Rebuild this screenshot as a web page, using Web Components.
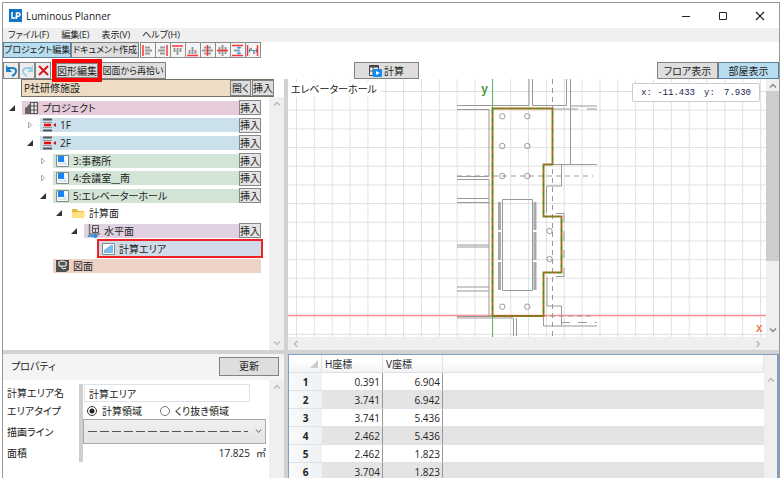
<!DOCTYPE html>
<html lang="ja">
<head>
<meta charset="utf-8">
<title>Luminous Planner</title>
<style>
html, body { margin: 0; height: 100%; background: #fff; }
body { font: 11px/14px "Open Sans", "Noto Sans CJK JP", sans-serif; color: #222; font-feature-settings: "palt"; }
</style>
</head>
<body>
<lp-app></lp-app>
<script>
const base = `<style>
:host, *, *::before { box-sizing: border-box; }
button, input, select { font: inherit; color: inherit; font-feature-settings: inherit; margin: 0; }
svg { display: block; }
</style>`;

function define(name, html, setup) {
  const template = document.createElement('template');
  template.innerHTML = base + html;
  customElements.define(name, class extends HTMLElement {
    constructor() {
      super();
      this.attachShadow({ mode: 'open' }).append(template.content.cloneNode(true));
    }
    connectedCallback() { if (setup) setup(this, this.shadowRoot); }
  });
}

define('lp-button', `<style>
:host { display: inline-flex; height: 17px; font-size: 10px; }
button { flex: 1; display: flex; align-items: center; justify-content: center; gap: 2px; padding: 0; border: 1px solid #828282; background: #dedede; line-height: 12px; white-space: nowrap; }
:host([active]) button { background: #b9ddf0; border-color: #5b8299; }
:host([icon]) button { background: #eee; }
</style><button type="button"><slot></slot></button>`, (host, root) => {
  if (host.title) root.querySelector('button').setAttribute('aria-label', host.title);
});

define('lp-titlebar', `<style>
:host { display: flex; align-items: center; height: 25px; padding: 0 12px 0 6px; gap: 4px; background: #fff; }
h1 { flex: 1; margin: 0; font-size: 10px; line-height: 16px; font-weight: 400; }
.win { display: flex; gap: 24px; }
.win button { width: 13px; height: 14px; padding: 0; border: 0; background: none; }
</style>
<svg width="13" height="13" viewBox="0 0 13 13"><rect width="13" height="13" fill="#1274c5"/><path d="M3 3v6h3.500M7.500 10V4h2q1.500 0 1.500 1.500T9.500 7.200H6.500" fill="none" stroke="#fff" stroke-width="1.500"/></svg>
<h1>Luminous Planner</h1>
<div class="win">
<button aria-label="最小化"><svg width="12" height="12"><path d="M2 6.500h8" stroke="#222"/></svg></button>
<button aria-label="最大化"><svg width="12" height="12"><path d="M2.500 2.500h7v7h-7z" fill="none" stroke="#222"/></svg></button>
<button aria-label="閉じる"><svg width="12" height="12"><path d="M2 2l8 8M10 2l-8 8" stroke="#222" stroke-width="1.200"/></svg></button>
</div>`);

define('lp-menubar', `<style>
:host { display: flex; height: 14px; padding: 0 5px; gap: 12px; background: #efefef; font-size: 9px; line-height: 14px; }
button { padding: 0; border: 0; background: none; line-height: 14px; }
</style><button>ファイル(F)</button><button>編集(E)</button><button>表示(V)</button><button>ヘルプ(H)</button>`);

const bars = {
  left: '<path d="M4 3.500h5M4 6.500h7M4 9.500h5"/><path class="r" d="M2 1v11"/>',
  right: '<path d="M4 3.500h5M2 6.500h7M4 9.500h5"/><path class="r" d="M11 1v11"/>',
  top: '<path d="M3.500 4v4M6.500 4v7M9.500 4v4"/><path class="r" d="M1 2h11"/>',
  bottom: '<path d="M3.500 6v4M6.500 3v7M9.500 6v4"/><path class="r" d="M1 11.500h11"/>',
  middle: '<path d="M3 3.500h7M1 6.500h11M3 9.500h7"/><path class="r" d="M6.500 1v11"/>',
  center: '<path d="M3.500 3v7M6.500 1v11M9.500 3v7"/><path class="r" d="M1 6.500h11"/>',
  vspace: '<path class="b" d="M8 3v7M6 4l2-1 2 1M6 9l2 1 2-1"/><path d="M3 6.500h4"/><path class="r" d="M1 1.500h11M1 11.500h11"/>',
  hspace: '<path class="b" d="M3 6.500h8M4 4.500l-1 2 1 2M10 4.500l1 2-1 2"/><path d="M5 4v3M8 6v4"/><path class="r" d="M1.500 1v11M11.500 1v11"/>'
};
const labels = { left: '左揃え', right: '右揃え', top: '上揃え', bottom: '下揃え', middle: '左右中央', center: '上下中央', vspace: '上下等間隔', hspace: '左右等間隔' };
define('lp-align-tools', `<style>
:host { display: flex; }
button { width: 16px; height: 16px; padding: 0; margin-right: -1px; border: 1px solid #8c8c8c; background: #f5f5f5; }
path { stroke: #999; stroke-width: 2; fill: none; } .r { stroke: #f33; stroke-width: 1.500; } .b { stroke: #2589e0; stroke-width: 1; }
</style>` + Object.keys(bars).map(k => `<button aria-label="${labels[k]}"><svg width="13" height="13">${bars[k]}</svg></button>`).join(''));

define('lp-scrollbar', `<style>
:host { display: flex; flex-direction: column; justify-content: space-between; background: #efefef; color: #bbb; padding: 2px 0; }
:host([horizontal]) { flex-direction: row; align-items: center; padding: 0 3px; }
svg { flex: none; align-self: center; fill: none; stroke: currentColor; stroke-width: 1.500; }
.thumb { display: none; background: #cdcdcd; }
:host([thumb]) .thumb { display: block; flex: 0 0 67%; margin-bottom: auto; }
:host([thumb]) { color: #888; }
:host([table]) { padding-top: 20px; }
:host([table]) svg:last-child, :host([open-end]) svg:last-child { display: none; }
</style>
<svg width="10" height="10" id="a"><path d="M2 6.500l3-3 3 3"/></svg><div class="thumb"></div><svg width="10" height="10" id="z"><path d="M2 3.500l3 3 3-3"/></svg>`, (host, root) => {
  if (host.hasAttribute('horizontal')) {
    root.querySelector('#a path').setAttribute('d', 'M6.500 2l-3 3 3 3');
    root.querySelector('#z path').setAttribute('d', 'M3.500 2l3 3-3 3');
  }
});

const icons = {
  building: '<path d="M1 13V7l3-2v8M4 13V4l2-1v10" fill="#666"/><path d="M6.500 1.500h7v11h-7zM10 1v12M6 5h8M6 9h8" fill="#eee" stroke="#555" stroke-width="1.200"/>',
  floor: '<path d="M1 1.500h9M1 12.500h9" stroke="#555" stroke-width="2"/><path d="M1 4.500h9M1 9.500h9" stroke="#999"/><path d="M2 7h7" stroke="#f00" stroke-width="2.500"/><path d="M11 7l3-2v4z" fill="#b22"/>',
  room: '<path d="M1.500 1.500h12v11h-12z" fill="#f7fbfd" stroke="#888"/><path d="M3 2h6v6H3z" fill="#1687f5"/><path d="M3 10h9M10 6v5" stroke="#c8d5dd"/>',
  folder: '<path d="M1 3h5l1 2h6v7H1z" fill="#e9b93b"/><path d="M1 6h13l-1 6H1z" fill="#ffe084"/>',
  plane: '<path d="M3.500 0v10H14" fill="none" stroke="#777" stroke-width="1.500"/><path d="M6.500 1.500h6v7h-6zM7 4.500h5M9.500 5v3" fill="none" stroke="#555"/><path d="M2 12h9M8 10l3 2-3 2" stroke="#2589df" fill="none" stroke-width="1.500"/>',
  area: '<path d="M1.500 1.500h12v11h-12z" fill="#fff" stroke="#888"/><path d="M3 11V8l7-5h2v8z" fill="#77bdf0"/>',
  drawing: '<path d="M1 1h13v10l-3 2H1z" fill="#505050"/><path d="M3 4q4-4 9 0M4 4v3h7V4M6 7l2 3 3-1" stroke="#fff" fill="none"/>'
};
define('lp-tree-row', `<style>
:host { display: flex; align-items: center; flex: 1; padding-left: var(--indent, 0); }
.toggle { flex: none; width: 17px; height: 12px; padding: 0 0 0 3px; border: 0; background: none; }
.bar { flex: 1; display: flex; align-items: center; height: 14px; gap: 3px; padding-left: 2px; background: var(--bar, transparent); font-size: 10px; line-height: 14px; white-space: nowrap; }
.text { flex: 1; }
.insert { align-self: center; height: 15px; width: 22px; padding: 0; border: 1px solid #888; background: #e4e4e4; line-height: 12px; }
:host([selected]) .bar { outline: 2px solid #e22; height: 15px; }
</style>
<button class="toggle"></button><div class="bar"><svg width="15" height="14"></svg><span class="text"><slot></slot></span><button class="insert">挿入</button></div>`, (host, root) => {
  const state = host.getAttribute('state');
  const toggle = root.querySelector('.toggle');
  toggle.setAttribute('aria-label', '展開');
  if (state === 'open') toggle.innerHTML = '<svg width="8" height="8"><path d="M7 1v6H1z" fill="#333"/></svg>';
  else if (state === 'closed') toggle.innerHTML = '<svg width="8" height="8"><path d="M2.500 1l3 3-3 3z" fill="#fff" stroke="#aaa"/></svg>';
  else toggle.style.visibility = 'hidden';
  root.querySelector('.bar svg').innerHTML = icons[host.getAttribute('icon')];
  if (host.hasAttribute('plain')) root.querySelector('.insert').remove();
});

define('lp-tree', `<style>
:host { display: grid; grid-template: 18px 1fr / 1fr 15px; background: #fff; min-height: 0; }
header { grid-column: 1 / 3; margin: 0 10px 0 18px; display: flex; align-items: center; gap: 1px; padding-left: 2px; border: 1px solid #776f64; background: #eedcc5; font-size: 10px; line-height: 14px; }
header span { flex: 1; } header lp-button { width: 21px; height: 16px; }
.rows { display: flex; flex-direction: column; height: 176px; margin: 2px 8px 0 0; }
</style>
<header><span>P社研修施設</span><lp-button>開く</lp-button><lp-button>挿入</lp-button></header>
<div class="rows">
<lp-tree-row icon="building" state="open" style="--indent:2px;--bar:#e6cbdb">プロジェクト</lp-tree-row>
<lp-tree-row icon="floor" state="closed" style="--indent:20px;--bar:#cae0eb">1F</lp-tree-row>
<lp-tree-row icon="floor" state="open" style="--indent:20px;--bar:#cae0eb">2F</lp-tree-row>
<lp-tree-row icon="room" state="closed" style="--indent:33px;--bar:#d2e4d5">3:事務所</lp-tree-row>
<lp-tree-row icon="room" state="closed" style="--indent:33px;--bar:#d2e4d5">4:会議室__南</lp-tree-row>
<lp-tree-row icon="room" state="open" style="--indent:33px;--bar:#d2e4d5">5:エレベーターホール</lp-tree-row>
<lp-tree-row icon="folder" state="open" plain style="--indent:49px">計算面</lp-tree-row>
<lp-tree-row icon="plane" state="open" style="--indent:64px;--bar:#e0d2e2">水平面</lp-tree-row>
<lp-tree-row icon="area" plain selected style="--indent:79px;--bar:#cfdbe8">計算エリア</lp-tree-row>
<lp-tree-row icon="drawing" plain style="--indent:33px;--bar:#edd2c8">図面</lp-tree-row>
</div>
<lp-scrollbar></lp-scrollbar>`);

define('lp-plan-view', `<style>
:host { display: grid; grid-template: 1fr 13px / 1fr 13px; position: relative; background: #efefef; min-height: 0; overflow: hidden; }
.canvas { width: 100%; height: 100%; min-height: 0; background: #fff; }
.name { position: absolute; left: 0; top: 3px; padding: 0 3px; background: #fff; font-size: 10px; line-height: 15px; }
.coords { position: absolute; right: 19px; top: 4px; display: flex; width: 128px; height: 19px; align-items: center; justify-content: space-between; padding: 0 8px; border: 1px solid #ccc; border-radius: 2px; background: #fff; color: #1c1c50; font: 9px/12px "Liberation Mono", monospace; }
.w { fill: none; stroke: #999; } .d { stroke-dasharray: 5 4; }
</style>
<svg class="canvas" viewBox="288 79 478 258" preserveAspectRatio="xMidYMid slice">
<defs><pattern id="g" x="296" y="91" width="17.850" height="18.680" patternUnits="userSpaceOnUse"><path d="M.500 0v19M0 .500h18" stroke="#e0e0e0" fill="none"/></pattern></defs>
<rect x="288" y="79" width="478" height="258" fill="url(#g)"/>
<path d="M288 315.500h478" stroke="#ff9090" stroke-width="1.500"/>
<path d="M492.500 79v258" stroke="#5cb868"/>
<path class="w" d="M457 105.500h72V79M457 109.500h32v66.500M457 179.500h32V316M457 176.500h32M457 198.500h32M457 202.500h32M457 245h32M457 247h32M457 287h32M457 291h32M457 316.500h56M457 318h56M532.500 79v26.500h34V79M570.500 79v86M570 106h27M552 109h26M587 109h10M543 164.500h54M561.500 165v21h-15v27M556 213.500h8v9M564 231v10M564 250v8M564 268v8.500h-8M547 277v29h14.500v20M543.500 316v10H597M513.500 318v18M516.500 318v18M502.500 199.500h30v91h-30z"/>
<path class="w d" d="M457 176h136M552.500 79v258M505 316h88"/>
<path class="w" stroke-dasharray="9 8" d="M561 322.500h36"/>
<path d="M499.500 202v28M499.500 232v28M499.500 262v28M535 202v28M535 232v28M535 262v28" stroke="#aaa" stroke-width="3"/>
<g class="w"><circle cx="502.300" cy="116.300" r="2.700"/><circle cx="527.300" cy="116.300" r="2.700"/><circle cx="502.300" cy="146" r="2.700"/><circle cx="527.300" cy="146" r="2.700"/><circle cx="502.300" cy="176" r="2.700"/><circle cx="527.300" cy="176" r="2.700"/><circle cx="502.300" cy="306.700" r="2.700"/><circle cx="527.300" cy="306.700" r="2.700"/><circle cx="549.500" cy="231" r="2.700"/><circle cx="549.500" cy="259" r="2.700"/></g>
<g fill="none"><path d="M492.500 108.500h60v56h-9v52h18v56h-18v43.500h-51z" stroke="#a5701c" stroke-width="1.900"/><path d="M492.500 108.500h60v56h-9v52h18v56h-18v43.500h-51z" stroke="#2c9a2a" stroke-width="1.200" stroke-dasharray="3 6"/></g>
<text x="481" y="93" font-family="Liberation Mono" font-weight="bold" font-size="12" fill="#4f9d48">y</text>
<text x="756" y="332" font-family="Liberation Mono" font-weight="bold" font-size="11" fill="#f27b4f">X</text>
</svg>
<lp-scrollbar thumb></lp-scrollbar>
<lp-scrollbar horizontal></lp-scrollbar>
<div class="name">エレベーターホール</div>
<div class="coords"><span>x: -11.433</span><span>y:</span><span>7.930</span></div>`);

define('lp-properties', `<style>
:host { display: grid; grid-template: 26px 1fr / 1fr 15px; background: #fff; min-height: 0; overflow: hidden; }
header { grid-column: 1 / 3; display: flex; align-items: center; justify-content: space-between; padding: 0 5px 2px 8px; background: #f4f4f4; }
h2 { margin: 0; font-size: 10px; font-weight: 400; }
header lp-button { width: 60px; height: 19px; }
.form { display: grid; grid-template: 18px 17px 25px 18px / 72px 4px 1fr; align-content: start; align-items: center; padding: 4px 3px 0 4px; font-size: 10px; }
.rule { grid-column: 2; grid-row: 1 / 5; align-self: stretch; background: #cfcfcf; }
.c1 { grid-column: 1; } .c3 { grid-column: 3; }
input[type=text] { height: 18px; margin: 0 16px 0 1px; padding: 0 4px; border: 1px solid #dbe2ea; min-width: 0; }
.radios { display: flex; gap: 18px; padding-left: 4px; }
label { white-space: nowrap; } .radios label { display: flex; align-items: center; gap: 5px; }
input[type=radio] { appearance: none; width: 10px; height: 10px; border: 1px solid #777; border-radius: 50%; background: #fff; }
input[type=radio]:checked { background: radial-gradient(#222 0 2px, #fff 3px); border-color: #333; }
.combo { display: grid; height: 25px; }
.combo > * { grid-area: 1 / 1; }
select { appearance: none; width: 100%; height: 25px; border: 1px solid #aaa; background: linear-gradient(#f0f0f0, #e3e3e3); }
.combo svg { width: 100%; height: 25px; pointer-events: none; z-index: 1; }
output { justify-self: end; display: flex; gap: 6px; }
</style>
<header><h2>プロパティ</h2><lp-button>更新</lp-button></header>
<div class="form">
<div class="rule"></div>
<label class="c1" style="grid-row:1" for="name">計算エリア名</label><input class="c3" style="grid-row:1" id="name" type="text" value="計算エリア">
<span class="c1" style="grid-row:2" id="type">エリアタイプ</span>
<div class="c3 radios" style="grid-row:2" role="radiogroup" aria-labelledby="type"><label><input type="radio" name="t" checked>計算領域</label><label><input type="radio" name="t">くり抜き領域</label></div>
<label class="c1" style="grid-row:3" for="line">描画ライン</label>
<div class="c3 combo" style="grid-row:3"><select id="line"><option aria-label="破線"></option></select><svg><path d="M5 12.500h160" stroke="#555" stroke-width="1.200" stroke-dasharray="9 3"/><path d="M173 10.500l2.500 3 2.500-3" fill="none" stroke="#666"/></svg></div>
<label class="c1" style="grid-row:4" for="size">面積</label><output class="c3" style="grid-row:4" id="size"><span>17.825</span><span>㎡</span></output>
</div>
<lp-scrollbar open-end></lp-scrollbar>`);

define('lp-points', `<style>
:host { display: grid; grid-template-columns: 1fr 13px; border: 1px solid #7fa0c0; border-width: 1px 2px 0 1px; background: #fff; min-height: 0; overflow: hidden; }
.clip { overflow: hidden; height: 0; min-height: 100%; }
table { width: 100%; border-collapse: separate; border-spacing: 0; table-layout: fixed; }
th, td { height: 18px; padding: 0 3px; line-height: 14px; font-size: 10px; border-bottom: 1px solid #e0e3e5; }
thead th { font-weight: 400; text-align: left; background: linear-gradient(#fff 30%, #f1f3f5); border-right: 1px solid #e0e3e6; }
tbody th { font-weight: 700; background: linear-gradient(90deg, #fafafa, #eef0f3); }
td { text-align: right; padding: 0 2px 0 0; }
td:nth-child(2), td:nth-child(3) { border-right: 1px solid #999; }
tbody tr:nth-child(even) td { background: #e4e4e4; }
thead svg { margin-left: auto; }
</style>
<div class="clip"><table><colgroup><col style="width:33px"><col style="width:61px"><col style="width:60px"><col></colgroup>
<thead><tr><th aria-label="番号"><svg width="8" height="8"><path d="M8 0v8H0z" fill="#ccc"/></svg></th><th>H座標</th><th>V座標</th><th></th></tr></thead><tbody>`
+ [['0.391', '6.904'], ['3.741', '6.942'], ['3.741', '5.436'], ['2.462', '5.436'], ['2.462', '1.823'], ['3.704', '1.823']].map((r, i) => `<tr><th scope="row">${i + 1}</th><td>${r[0]}</td><td>${r[1]}</td><td></td></tr>`).join('')
+ `</tbody></table></div><lp-scrollbar table></lp-scrollbar>`);

define('lp-app', `<style>
:host { display: block; height: 100vh; padding: 2px 4px 4px 2px; }
.window { height: 100%; display: flex; flex-direction: column; border: 1px solid #999; border-bottom: 0; }
.bar { display: flex; align-items: center; height: 16px; }
.bar.second { height: 21px; padding-top: 4px; justify-content: space-between; }
.tabs { display: flex; margin-right: 1px; } .tabs lp-button { height: 16px; width: 68px; font-size: 9px; }
.group { display: flex; align-items: center; } .tools { flex: 1 0 0; } .views { flex: 1 0 0; justify-content: flex-end; } .views lp-button { width: 61px; }
.tools lp-button[icon] { width: 16px; }
.tools .mark { outline: 4px solid #f00; width: 42px; height: 15px; margin: 0 0 0 5px; z-index: 2; position: relative; }
.tools .pick { width: 68px; padding-left: 2px; font-size: 9px; }
.run { width: 65px; margin-right: 10px; }
main { flex: 1; min-height: 0; display: grid; grid-template: 271px 1fr / 281px 1fr; gap: 4px; background: #d2d2d2; }
</style>
<div class="window">
<lp-titlebar></lp-titlebar><lp-menubar></lp-menubar>
<div class="bar"><div class="tabs"><lp-button active>プロジェクト編集</lp-button><lp-button>ドキュメント作成</lp-button></div><lp-align-tools></lp-align-tools></div>
<div class="bar second">
<div class="group tools">
<lp-button icon title="元に戻す"><svg width="13" height="13"><path d="M3 4h4q4 0 4 3t-4 5" fill="none" stroke="#1f7fc4" stroke-width="2"/><path d="M1 1v7h6z" fill="#1f7fc4"/></svg></lp-button>
<lp-button icon title="やり直し"><svg width="13" height="13"><path d="M10 4H6Q2 4 2 7t4 5" fill="none" stroke="#9bcfe9" stroke-width="2"/><path d="M12 1v7H6z" fill="#9bcfe9"/></svg></lp-button>
<lp-button icon title="削除"><svg width="13" height="13"><path d="M2 2l9 9M11 2l-9 9" stroke="#dc1616" stroke-width="2"/></svg></lp-button>
<lp-button class="mark">図形編集</lp-button><lp-button class="pick">図面から再拾い</lp-button>
</div>
<lp-button class="run"><svg width="14" height="13"><path d="M1.500 1.500h9v10h-9z" fill="#eee" stroke="#444"/><path d="M2 2.500h8" stroke="#444" stroke-width="2"/><path d="M2 7h8M5 3v8" stroke="#555"/><rect x="5" y="5" width="9" height="8" rx="1" fill="#138bf4"/><path d="M8 7l4 2-4 2z" fill="#fff"/></svg>計算</lp-button>
<div class="group views"><lp-button>フロア表示</lp-button><lp-button active>部屋表示</lp-button></div>
</div>
<main><lp-tree></lp-tree><lp-plan-view></lp-plan-view><lp-properties></lp-properties><lp-points></lp-points></main>
</div>`);
</script>
</body>
</html>
